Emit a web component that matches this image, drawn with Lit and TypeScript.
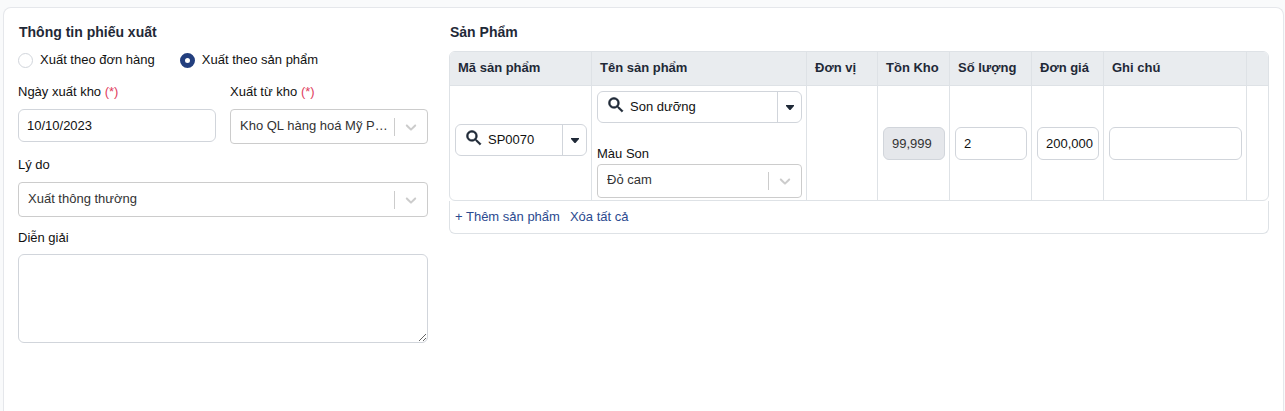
import { LitElement, html, css } from "lit";
import { customElement, property } from "lit/decorators.js";

const base = css`
  * {
    box-sizing: border-box;
  }
  input,
  select,
  textarea,
  button {
    font: inherit;
    color: inherit;
    margin: 0;
  }
`;

@customElement("select-field")
class SelectField extends LitElement {
  @property() label = "";
  @property() value = "";
  @property({ type: Boolean }) required = false;
  @property({ type: Boolean, reflect: true }) compact = false;

  static styles = [
    base,
    css`
      :host {
        display: block;
        min-width: 0;
      }
      .label {
        display: block;
        line-height: 18px;
        margin-bottom: 8px;
        color: #111;
      }
      .required {
        color: #e0405e;
      }
      .control {
        display: flex;
        align-items: center;
        height: 35px;
        border: 1px solid #ccc;
        border-radius: 4px;
        background: #fff;
        color: #333;
      }
      .select {
        flex: 1;
        min-width: 0;
        height: 100%;
        padding: 0 2px 2px 9px;
        border: 0;
        outline: 0;
        background: transparent;
        appearance: none;
        overflow: hidden;
        white-space: nowrap;
        text-overflow: ellipsis;
      }
      .divider {
        width: 1px;
        height: 18px;
        background: #ccc;
      }
      .chevron {
        width: 18px;
        height: 18px;
        margin: 0 7px;
        fill: #ccc;
      }
      :host([compact]) .label {
        margin-bottom: 1px;
      }
      :host([compact]) .control {
        height: 34px;
      }
    `,
  ];

  render() {
    return html`
      <label class="label" for="select"
        >${this.label}${this.required
          ? html` <span class="required">(*)</span>`
          : ""}</label
      >
      <div class="control">
        <select class="select" id="select">
          <option>${this.value}</option>
        </select>
        <span class="divider"></span>
        <svg class="chevron" viewBox="0 0 20 20" aria-hidden="true">
          <path
            d="M4.516 7.548c0.436-0.446 1.043-0.481 1.576 0l3.908 3.747 3.908-3.747c0.533-0.481 1.141-0.446 1.574 0 0.436 0.445 0.408 1.197 0 1.615-0.406 0.418-4.695 4.502-4.695 4.502-0.217 0.223-0.502 0.335-0.787 0.335s-0.57-0.112-0.789-0.335c0 0-4.287-4.084-4.695-4.502s-0.436-1.17 0-1.615z"
          />
        </svg>
      </div>
    `;
  }
}

@customElement("search-combo")
class SearchCombo extends LitElement {
  @property() label = "";
  @property() value = "";

  static styles = [
    base,
    css`
      :host {
        display: block;
      }
      .combo {
        display: flex;
        align-items: stretch;
        height: 32px;
        border: 1px solid #d1d5db;
        border-radius: 6px;
        background: #fff;
        overflow: hidden;
      }
      .search {
        flex: none;
        align-self: center;
        width: 20px;
        height: 20px;
        margin: 0 4px 4px 8px;
        fill: #1f2937;
        stroke: #1f2937;
        stroke-width: 0.7;
      }
      .input {
        flex: 1;
        min-width: 0;
        padding: 0;
        border: 0;
        outline: 0;
        background: transparent;
        color: #111;
      }
      .toggle {
        flex: none;
        display: grid;
        place-items: center;
        width: 24px;
        padding: 0;
        border: 0;
        border-left: 1px solid #d1d5db;
        background: transparent;
      }
      .caret {
        width: 8px;
        height: 5px;
        fill: #1f2937;
      }
    `,
  ];

  render() {
    return html`
      <div class="combo">
        <svg class="search" viewBox="0 0 24 24" aria-hidden="true">
          <path
            d="M15.5 14h-.79l-.28-.27A6.471 6.471 0 0 0 16 9.5 6.5 6.5 0 1 0 9.5 16c1.61 0 3.09-.59 4.23-1.57l.27.28v.79l5 4.99L20.49 19l-4.99-5zm-6 0C7.01 14 5 11.99 5 9.5S7.01 5 9.5 5 14 7.01 14 9.5 11.99 14 9.5 14z"
          />
        </svg>
        <input
          class="input"
          type="text"
          aria-label=${this.label}
          .value=${this.value}
        />
        <button class="toggle" type="button" aria-label="Mở danh sách">
          <svg class="caret" viewBox="0 0 8 5" aria-hidden="true">
            <path d="M0 0h8v1L4.5 5h-1L0 1z" />
          </svg>
        </button>
      </div>
    `;
  }
}

@customElement("app-root")
class AppRoot extends LitElement {
  static styles = [
    base,
    css`
      :host {
        display: flex;
        min-height: 100vh;
        padding: 7px 1px 0 3px;
        box-sizing: border-box;
        background: #f9fafb;
        font: 13px/18px "Liberation Sans", Arial, sans-serif;
        color: #111;
      }
      .card {
        flex: 1;
        min-width: 0;
        display: grid;
        grid-template-columns: minmax(0, 1fr) minmax(0, 2fr);
        column-gap: 21px;
        align-items: start;
        padding: 15px 14px 24px;
        border: 1px solid #e5e7eb;
        border-bottom: 0;
        border-radius: 8px 8px 0 0;
        background: #fff;
      }
      .title {
        margin: 0;
        padding-left: 1px;
        font-size: 14px;
        line-height: 18px;
        font-weight: 700;
        color: #1f2937;
      }
      .radios {
        display: flex;
        gap: 25px;
        margin-top: 10px;
      }
      .choice {
        display: flex;
        align-items: center;
        gap: 7px;
      }
      .radio {
        appearance: none;
        width: 15px;
        height: 15px;
        border: 1px solid #d1d5db;
        border-radius: 50%;
        background: #fff;
      }
      .radio:checked {
        border: 5px solid #233f7e;
      }
      .pair {
        display: grid;
        grid-template-columns: 1fr 1fr;
        gap: 14px;
        align-items: start;
        margin: 14px 0 12px;
      }
      .label {
        display: block;
        margin-bottom: 8px;
      }
      .required {
        color: #e0405e;
      }
      .input {
        display: block;
        width: 100%;
        height: 33px;
        padding: 0 4px 0 8px;
        border: 1px solid #d1d5db;
        border-radius: 6px;
        background: #fff;
        outline: 0;
      }
      .input:disabled {
        background: #e5e7eb;
        color: #333;
      }
      .notes {
        margin-top: 12px;
      }
      .notes .label {
        margin-bottom: 7px;
      }
      .textarea {
        display: block;
        width: 100%;
        height: 89px;
        padding: 8px;
        border: 1px solid #d1d5db;
        border-radius: 6px;
        background: #fff;
        outline: 0;
        resize: vertical;
      }
      .table {
        width: 100%;
        margin-top: 10px;
        table-layout: fixed;
        border-collapse: separate;
        border-spacing: 0;
        border: 1px solid #dee2e6;
        border-radius: 6px;
        overflow: hidden;
      }
      .code {
        width: 142px;
      }
      .small {
        width: 71px;
      }
      .stock {
        width: 72px;
      }
      .amount {
        width: 82px;
      }
      .remark {
        width: 143px;
      }
      .action {
        width: 21px;
      }
      .head {
        height: 34px;
        padding: 0 8px 2px;
        text-align: left;
        white-space: nowrap;
        font-weight: 700;
        color: #1f2937;
        background: #e9ecef;
        border-bottom: 1px solid #dee2e6;
        border-right: 1px solid #dee2e6;
      }
      .cell {
        padding: 5px 4px 2px 5px;
        border-right: 1px solid #dee2e6;
      }
      .cell .input {
        margin-bottom: 2px;
      }
      .head:last-child,
      .cell:last-child {
        border-right: 0;
      }
      .lifted {
        margin-bottom: 9px;
      }
      .variant {
        margin-top: 22px;
      }
      .foot {
        display: flex;
        gap: 10px;
        padding: 7px 5px;
        border: 1px solid #dee2e6;
        border-top: 0;
        border-radius: 0 0 6px 6px;
      }
      .link {
        padding: 0;
        border: 0;
        background: transparent;
        color: #2b4a8f;
      }
    `,
  ];

  render() {
    return html`
      <main class="card">
        <section>
          <h2 class="title">Thông tin phiếu xuất</h2>
          <div class="radios">
            <label class="choice"
              ><input class="radio" type="radio" name="mode" />Xuất theo đơn
              hàng</label
            >
            <label class="choice"
              ><input class="radio" type="radio" name="mode" checked />Xuất theo
              sản phẩm</label
            >
          </div>
          <div class="pair">
            <div>
              <label class="label" for="date"
                >Ngày xuất kho <span class="required">(*)</span></label
              >
              <input class="input" id="date" type="text" value="10/10/2023" />
            </div>
            <select-field
              label="Xuất từ kho"
              value="Kho QL hàng hoá Mỹ Phẩm"
              required
            ></select-field>
          </div>
          <select-field label="Lý do" value="Xuất thông thường"></select-field>
          <div class="notes">
            <label class="label" for="notes">Diễn giải</label>
            <textarea class="textarea" id="notes"></textarea>
          </div>
        </section>
        <section>
          <h2 class="title">Sản Phẩm</h2>
          <table class="table">
            <colgroup>
              <col class="code" />
              <col />
              <col class="small" />
              <col class="stock" />
              <col class="amount" />
              <col class="stock" />
              <col class="remark" />
              <col class="action" />
            </colgroup>
            <thead>
              <tr>
                <th class="head">Mã sản phẩm</th>
                <th class="head">Tên sản phẩm</th>
                <th class="head">Đơn vị</th>
                <th class="head">Tồn Kho</th>
                <th class="head">Số lượng</th>
                <th class="head">Đơn giá</th>
                <th class="head">Ghi chú</th>
                <th class="head"></th>
              </tr>
            </thead>
            <tbody>
              <tr>
                <td class="cell">
                  <search-combo
                    class="lifted"
                    label="Mã sản phẩm"
                    value="SP0070"
                  ></search-combo>
                </td>
                <td class="cell">
                  <search-combo
                    label="Tên sản phẩm"
                    value="Son dưỡng"
                  ></search-combo>
                  <select-field
                    class="variant"
                    label="Màu Son"
                    value="Đỏ cam"
                    compact
                  ></select-field>
                </td>
                <td class="cell"></td>
                <td class="cell">
                  <input
                    class="input"
                    type="text"
                    aria-label="Tồn Kho"
                    value="99,999"
                    disabled
                  />
                </td>
                <td class="cell">
                  <input class="input" type="text" aria-label="Số lượng" value="2" />
                </td>
                <td class="cell">
                  <input
                    class="input"
                    type="text"
                    aria-label="Đơn giá"
                    value="200,000"
                  />
                </td>
                <td class="cell">
                  <input class="input" type="text" aria-label="Ghi chú" />
                </td>
                <td class="cell"></td>
              </tr>
            </tbody>
          </table>
          <div class="foot">
            <button class="link" type="button">+ Thêm sản phẩm</button>
            <button class="link" type="button">Xóa tất cả</button>
          </div>
        </section>
      </main>
    `;
  }
}
